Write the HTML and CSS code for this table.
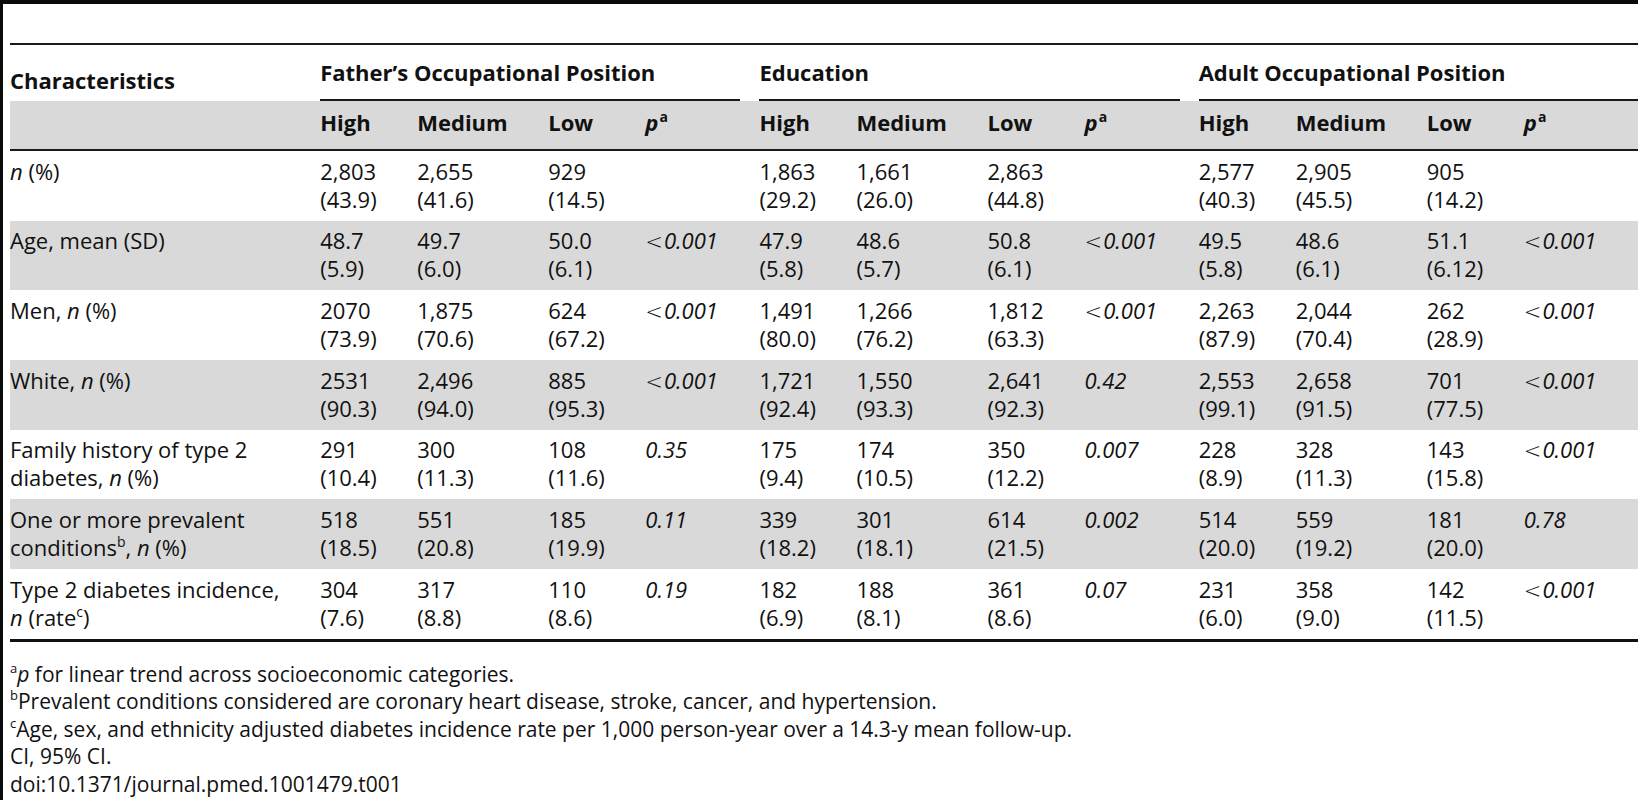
FILE: index.html
```html
<!DOCTYPE html>
<html lang="en">
<head>
<meta charset="utf-8">
<title>Table 1</title>
<link rel="stylesheet" href="styles.css">
</head>
<body>
<div class="frame">
  <table class="t">
    <colgroup>
      <col class="c-lab">
      <col class="c-hi"><col class="c-med"><col class="c-lo"><col class="c-p">
      <col class="c-hi"><col class="c-med"><col class="c-lo"><col class="c-p">
      <col class="c-hi"><col class="c-med"><col class="c-lo"><col class="c-p">
    </colgroup>
    <thead>
      <tr class="h1">
        <th class="lab">Characteristics</th>
        <th colspan="4" class="grp"><div class="grp-in">Father’s Occupational Position</div></th>
        <th colspan="4" class="grp"><div class="grp-in">Education</div></th>
        <th colspan="4" class="grp last"><div class="grp-in">Adult Occupational Position</div></th>
      </tr>
      <tr class="h2 shade">
        <th></th>
        <th>High</th><th>Medium</th><th>Low</th><th><i>p</i><sup>a</sup></th>
        <th>High</th><th>Medium</th><th>Low</th><th><i>p</i><sup>a</sup></th>
        <th>High</th><th>Medium</th><th>Low</th><th><i>p</i><sup>a</sup></th>
      </tr>
    </thead>
    <tbody>
      <tr>
        <td><i>n</i> (%)</td>
        <td>2,803<br>(43.9)</td><td>2,655<br>(41.6)</td><td>929<br>(14.5)</td><td></td>
        <td>1,863<br>(29.2)</td><td>1,661<br>(26.0)</td><td>2,863<br>(44.8)</td><td></td>
        <td>2,577<br>(40.3)</td><td>2,905<br>(45.5)</td><td>905<br>(14.2)</td><td></td>
      </tr>
      <tr class="shade">
        <td>Age, mean (SD)</td>
        <td>48.7<br>(5.9)</td><td>49.7<br>(6.0)</td><td>50.0<br>(6.1)</td><td class="pv"><span class="lt">&lt;</span><i>0.001</i></td>
        <td>47.9<br>(5.8)</td><td>48.6<br>(5.7)</td><td>50.8<br>(6.1)</td><td class="pv"><span class="lt">&lt;</span><i>0.001</i></td>
        <td>49.5<br>(5.8)</td><td>48.6<br>(6.1)</td><td>51.1<br>(6.12)</td><td class="pv"><span class="lt">&lt;</span><i>0.001</i></td>
      </tr>
      <tr>
        <td>Men, <i>n</i> (%)</td>
        <td>2070<br>(73.9)</td><td>1,875<br>(70.6)</td><td>624<br>(67.2)</td><td class="pv"><span class="lt">&lt;</span><i>0.001</i></td>
        <td>1,491<br>(80.0)</td><td>1,266<br>(76.2)</td><td>1,812<br>(63.3)</td><td class="pv"><span class="lt">&lt;</span><i>0.001</i></td>
        <td>2,263<br>(87.9)</td><td>2,044<br>(70.4)</td><td>262<br>(28.9)</td><td class="pv"><span class="lt">&lt;</span><i>0.001</i></td>
      </tr>
      <tr class="shade">
        <td>White, <i>n</i> (%)</td>
        <td>2531<br>(90.3)</td><td>2,496<br>(94.0)</td><td>885<br>(95.3)</td><td class="pv"><span class="lt">&lt;</span><i>0.001</i></td>
        <td>1,721<br>(92.4)</td><td>1,550<br>(93.3)</td><td>2,641<br>(92.3)</td><td class="pv"><i>0.42</i></td>
        <td>2,553<br>(99.1)</td><td>2,658<br>(91.5)</td><td>701<br>(77.5)</td><td class="pv"><span class="lt">&lt;</span><i>0.001</i></td>
      </tr>
      <tr>
        <td>Family history of type 2<br>diabetes, <i>n</i> (%)</td>
        <td>291<br>(10.4)</td><td>300<br>(11.3)</td><td>108<br>(11.6)</td><td class="pv"><i>0.35</i></td>
        <td>175<br>(9.4)</td><td>174<br>(10.5)</td><td>350<br>(12.2)</td><td class="pv"><i>0.007</i></td>
        <td>228<br>(8.9)</td><td>328<br>(11.3)</td><td>143<br>(15.8)</td><td class="pv"><span class="lt">&lt;</span><i>0.001</i></td>
      </tr>
      <tr class="shade">
        <td>One or more prevalent<br>conditions<sup>b</sup>, <i>n</i> (%)</td>
        <td>518<br>(18.5)</td><td>551<br>(20.8)</td><td>185<br>(19.9)</td><td class="pv"><i>0.11</i></td>
        <td>339<br>(18.2)</td><td>301<br>(18.1)</td><td>614<br>(21.5)</td><td class="pv"><i>0.002</i></td>
        <td>514<br>(20.0)</td><td>559<br>(19.2)</td><td>181<br>(20.0)</td><td class="pv"><i>0.78</i></td>
      </tr>
      <tr class="lastrow">
        <td>Type 2 diabetes incidence,<br><i>n</i> (rate<sup>c</sup>)</td>
        <td>304<br>(7.6)</td><td>317<br>(8.8)</td><td>110<br>(8.6)</td><td class="pv"><i>0.19</i></td>
        <td>182<br>(6.9)</td><td>188<br>(8.1)</td><td>361<br>(8.6)</td><td class="pv"><i>0.07</i></td>
        <td>231<br>(6.0)</td><td>358<br>(9.0)</td><td>142<br>(11.5)</td><td class="pv"><span class="lt">&lt;</span><i>0.001</i></td>
      </tr>
    </tbody>
  </table>
  <div class="notes">
    <p><sup>a</sup><i>p</i> for linear trend across socioeconomic categories.</p>
    <p><sup>b</sup>Prevalent conditions considered are coronary heart disease, stroke, cancer, and hypertension.</p>
    <p><sup>c</sup>Age, sex, and ethnicity adjusted diabetes incidence rate per 1,000 person-year over a 14.3-y mean follow-up.</p>
    <p>CI, 95% CI.</p>
    <p>doi:10.1371/journal.pmed.1001479.t001</p>
  </div>
</div>
</body>
</html>
```

FILE: styles.css
```css
html, body {
  margin: 0;
  padding: 0;
  background: #ffffff;
}

body {
  font-family: "Open Sans", "Noto Sans", "Liberation Sans", sans-serif;
  color: #111111;
  width: 1638px;
  height: 800px;
  overflow: hidden;
}

.frame {
  box-sizing: border-box;
  width: 1638px;
  height: 800px;
  border-top: 4px solid #0a0a0a;
  border-left: 3px solid #0a0a0a;
  padding: 39px 0 0 7px;
}

.t {
  table-layout: fixed;
  width: 1628px;
  border-collapse: separate;
  border-spacing: 0;
  font-size: 22px;
  line-height: 28px;
}

.c-lab { width: 310px; }
.c-hi { width: 97px; }
.c-med { width: 131px; }
.c-lo { width: 97px; }
.c-p { width: 114px; }

.t th,
.t td {
  padding: 0;
  text-align: left;
  vertical-align: top;
  white-space: nowrap;
}

.t th {
  font-weight: 700;
}

.h1 th {
  border-top: 2px solid #1a1a1a;
}

.h1 th.lab {
  padding-top: 20.5px;
}

.h1 th.grp {
  padding-right: 19px;
  vertical-align: bottom;
}

.h1 th.grp.last {
  padding-right: 0;
}

.grp-in {
  padding: 12.5px 0 13.5px 0;
  border-bottom: 2px solid #1a1a1a;
}

.h2 th {
  padding-top: 6.5px;
  padding-bottom: 13.5px;
  border-bottom: 2px solid #1a1a1a;
}

.shade {
  background: #d9d9d9;
}

.t td {
  padding-top: 5.7px;
  padding-bottom: 8px;
}

.lastrow td {
  border-bottom: 3px solid #111111;
}

.t sup {
  font-size: 14px;
  line-height: 0;
  vertical-align: 0;
  position: relative;
  top: -9px;
}

.h2 sup {
  font-weight: 700;
  margin-left: 1px;
}

.lt {
  font-family: "DejaVu Sans", "Liberation Sans", sans-serif;
  font-weight: 200;
  font-size: 21px;
  margin-right: 1px;
}

.notes {
  margin-top: 19px;
  font-size: 21px;
  line-height: 27.5px;
}

.notes p {
  margin: 0;
  white-space: nowrap;
}

.notes sup {
  font-size: 13px;
  line-height: 0;
  vertical-align: 0;
  position: relative;
  top: -9px;
}
```
